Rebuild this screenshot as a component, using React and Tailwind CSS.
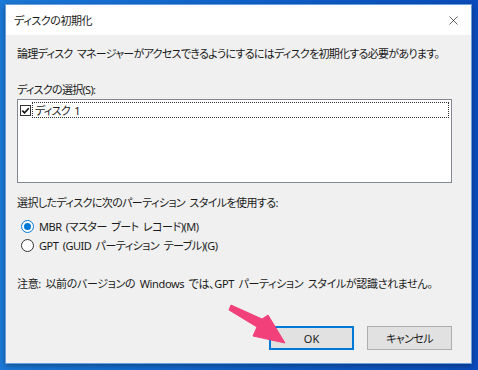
import { X } from 'lucide-react';

const jp = "font-['Noto_Sans','Noto_Sans_CJK_JP',sans-serif] [font-feature-settings:'palt']";

function Radio({ checked, label }) {
  return (
    <div className="flex items-center h-[19px] pl-[4px]">
      <span className={`w-[13px] h-[13px] rounded-full border bg-white flex items-center justify-center ${checked ? 'border-[#0078d7]' : 'border-[#333]'}`}>
        {checked && <span className="w-[7px] h-[7px] rounded-full bg-[#0078d7]" />}
      </span>
      <span className="ml-[5px] tracking-[-0.5px]">{label}</span>
    </div>
  );
}

export default function App() {
  return (
    <div className={`w-[478px] h-[370px] bg-gradient-to-r from-[#1c7ad8] to-[#0b4cbd] pl-[5px] pr-[6px] pt-[4px] pb-[6px] ${jp} text-[11px] tracking-[-0.7px] [word-spacing:2px] text-[#1a1a1a] leading-none`}>
      <div className="relative w-full h-full flex flex-col border border-[#6b9edc] shadow-[0_2px_6px_rgba(0,0,0,0.35)]">
        {/* title bar */}
        <div className="h-[30px] bg-white flex items-center justify-between pl-[8px] pr-[10px]">
          <span className="text-[11px] tracking-[-0.4px]">ディスクの初期化</span>
          <X size={15} strokeWidth={1.1} className="text-[#222]" />
        </div>

        {/* body */}
        <div className="flex-1 bg-[#f0f0f0] pl-[11px] pr-[19px] flex flex-col whitespace-nowrap">
          <p className="mt-[11px] h-[14px] flex items-center">論理ディスク マネージャーがアクセスできるようにするにはディスクを初期化する必要があります。</p>

          <p className="mt-[22px] h-[14px] flex items-center">ディスクの選択(S):</p>
          <div className="mt-[3px] h-[84px] bg-white border border-[#828790] p-[2px]">
            <div className="flex items-center h-[16px]">
              <span className="w-[11px] h-[11px] border border-[#333] bg-white flex items-center justify-center">
                <svg width="9" height="9" viewBox="0 0 9 9">
                  <path d="M1.3 4.6 L3.5 6.8 L7.8 2.2" fill="none" stroke="#111" strokeWidth="1.6" />
                </svg>
              </span>
              <span className="ml-[1px] flex-1 h-[16px] border border-dotted border-[#333] flex items-center pl-[2px]">ディスク 1</span>
            </div>
          </div>

          <p className="mt-[12px] h-[14px] flex items-center tracking-[-0.6px]">選択したディスクに次のパーティション スタイルを使用する:</p>
          <div className="mt-[8px]">
            <Radio checked label="MBR (マスター ブート レコード)(M)" />
            <Radio label="GPT (GUID パーティション テーブル)(G)" />
          </div>

          <p className="mt-[21px] h-[14px] flex items-center tracking-[-0.35px]">注意: 以前のバージョンの Windows では、GPT パーティション スタイルが認識されません。</p>

          <div className="mt-auto mb-[13px] flex justify-end gap-[13px] tracking-normal">
            <button className="w-[85px] h-[24px] bg-[#e1e1e1] border-2 border-[#0078d7] flex items-center justify-center">OK</button>
            <button className="w-[85px] h-[24px] bg-[#e1e1e1] border border-[#adadad] flex items-center justify-center tracking-[-0.6px]">キャンセル</button>
          </div>
        </div>

        {/* pink pointer arrow */}
        <svg className="absolute left-[-6px] top-[-5px] pointer-events-none" width="478" height="370" viewBox="0 0 478 370">
          <polygon
            points="231,305 262,319 268,315 285,343 253,336 257,327 229,310"
            fill="#f2407b"
            stroke="#f2407b"
            strokeWidth="1"
            strokeLinejoin="round"
          />
        </svg>
      </div>
    </div>
  );
}
